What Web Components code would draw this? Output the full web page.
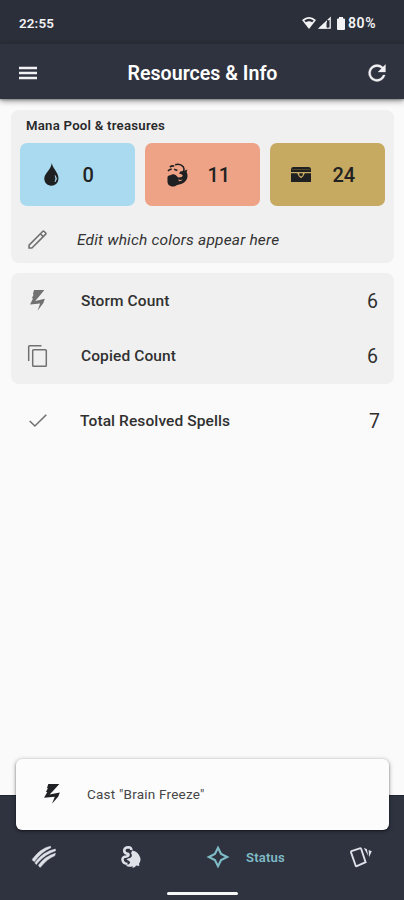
<!DOCTYPE html>
<html lang="en">
<head>
<meta charset="utf-8">
<title>Resources &amp; Info</title>
<style>
html,body{margin:0;height:100%}
body{font-family:Roboto,"Liberation Sans",sans-serif;background:#fafafa;overflow:hidden}
</style>
</head>
<body>
<spell-app></spell-app>
<script>
const ICONS = {
  menu: ['0 0 18 12', '<path d="M0 1h18M0 6h18M0 11h18" fill="none" stroke="currentColor" stroke-width="2.300"/>'],
  refresh: ['3.5 3.5 17 17', '<path d="M17.65 6.35A7.95 7.95 0 0 0 12 4a8 8 0 1 0 7.73 10h-2.08A6 6 0 1 1 12 6c1.66 0 3.14.69 4.22 1.78L13 11h7V4z" stroke="currentColor" stroke-width=".3"/>'],
  wifi: ['0 0 14 12', '<path d="M0 3Q7-3 14 3L7 12z"/><path d="M2.3 3.5Q7 .2 11.7 3.5L10.2 5.3Q7 3 3.8 5.3z" fill="#2b2f39"/>'],
  signal: ['0 0 13 12', '<path d="M1.5 11.2H12.2V1z" fill="none" stroke="currentColor" stroke-width="1.3"/><path d="M1 11.5L8.5 4.5V11.5z"/><path d="M9.7 3v7.600" stroke="#2b2f39" stroke-width="1.300"/>'],
  battery: ['0 0 8 13', '<path d="M2 0h4v1.5h1q1 0 1 1V12q0 1-1 1H1q-1 0-1-1V2.500q0-1 1-1h1z"/>'],
  drop: ['0 0 16 23', '<path d="M8.300 0C9 5 15.400 9.300 15.400 15.300C15.400 20 12 22.700 7.800 22.700C3.300 22.700.3 19.600.3 15.600C.3 10.200 7.300 7.300 8.300 0z"/><path d="M12 12.500Q14.800 16 11.800 18.800Q13.300 15.800 12 12.500z" fill="#a9daef" stroke="#a9daef" stroke-width=".7"/>'],
  flame: ['0 0 22 24', '<path d="M.5 15Q.3 12.300 3.500 12.300Q6.500 10.300 9 12Q12 13.500 12 16.500Q13.500 19.500 10.500 22Q8 24 5 23.500Q.8 22.500.5 19z"/><path d="M8.500 1.700Q14 .3 17 3.800Q18.600 6 17.300 8.500M3 4Q5.500 2.300 7.500 3.300M1 8Q3 5.800 5 6.300M7.500 6.300L10.800 7.600" fill="none" stroke="currentColor" stroke-width="1.600"/><path d="M14 8.500Q18.500 8 21.300 6.500Q19.800 9 21.400 11.500Q22 15.500 19 18.500Q16.500 21.300 10 22L11.500 18.600Q15.500 18 17 16Q14.500 17.500 12 16.500L11 14.300Q16 14.800 16.500 12.500Q16 10.800 12.500 10.500z"/>'],
  chest: ['0 0 20 15', '<path d="M2 0H18Q20 .3 20 2.500V5H0V2.500Q0 .3 2 0zM0 6.200H6.200L7.700 9.200L10 11.200L12.300 9.200L13.800 6.200H20V15H0z"/><path d="M8.300 6.300H11.700V8.200L10 9.600L8.300 8.200z"/><path d="M1 2.500h18" stroke="#6c602f" stroke-width=".6"/>'],
  pencil: ['3 3 18 18', '<path d="M4 17.300V20H6.700L19.800 6.900Q20.300 6.400 19.800 5.900L18.100 4.200Q17.600 3.700 17.100 4.200zM14.700 6.600L17.400 9.300" fill="none" stroke="currentColor" stroke-width="1.500"/>'],
  bolt: ['0 0 16 21', '<path d="M4.300 0H15.300L9 7.300L5.500 10.900L15.800 8.800L14.300 13L8 20.700L10.800 13.500L0 14.400L3.200 8.600L2 8L3.900 4.800L3 4.300z"/>'],
  copy: ['2 1 19 22', '<path d="M2.700 17V2.500Q2.700 1.700 3.500 1.700H15.500M7.500 5.700H19.500Q20.300 5.700 20.300 6.500V21.500Q20.300 22.300 19.500 22.300H7.500Q6.700 22.300 6.700 21.500V6.500Q6.700 5.700 7.500 5.700z" fill="none" stroke="currentColor" stroke-width="1.500"/>'],
  check: ['0 0 18 13', '<path d="M.7 7L5.900 12L17.300.7" fill="none" stroke="currentColor" stroke-width="1.600"/>'],
  slashes: ['0 0 24 22', '<path d="M2.500 15.500Q.2 15 .3 13.200Q8.500 2.200 18.500.2L18.800 1.800Q9.500 5.700 2.500 15.500zM4.600 18.400Q2.800 18 3.200 16.300Q11.500 5.500 23.300 3L23.600 4.800Q13.500 8.200 6.600 15.800Q5.300 17 4.600 18.400zM8.400 21.300Q6.500 20.800 6.600 19Q13.300 10 23.500 7.300L22.700 9.800Q15.500 12.500 8.400 21.300z" stroke="currentColor" stroke-width=".5"/>'],
  fist: ['0 0 20 23', '<path d="M10.300 4.300Q10.500 1.400 7.500 1.300Q3.200 1.300 3.200 5.200Q3.500 8 7.300 8.400Q8.300 10.300 5.500 11Q1.300 11 1.500 14.500Q2.300 18.800 6.500 18.500" fill="none" stroke="currentColor" stroke-width="2.600"/><path d="M11.300 4.600Q17 6 18.500 10.500Q20.800 14.500 18 18.500L18.300 20.800L15.300 20.500Q14.300 22.300 11.500 22.900L11.800 21.200Q7.500 22.700 5 20.500Q8.300 19.300 9.300 17.500Q9 15.500 5.500 14.500Q6.500 13 9.500 12.300Q12 10.300 10 7.300z"/>'],
  spark: ['0 0 22 22', '<path d="M11 1.800L14.100 7.900L20.200 11L14.100 14.100L11 20.200L7.900 14.100L1.800 11L7.900 7.900z" fill="none" stroke="currentColor" stroke-width="2.100"/>'],
  cards: ['0 0 22 21', '<path d="M1.500 4.200L9.800 1.400Q10.900 1.100 11.300 2.200L15.600 15.200L6.800 19.200Q6 19.400 5.600 18.500L1 5.300Q.9 4.500 1.500 4.200z" fill="none" stroke="currentColor" stroke-width="1.900"/><path d="M13.800 1L16.800 2L18.300 9zM18.700 3.100L21.800 4.200L19 10.300z"/>']
};

class UiIcon extends HTMLElement {
  connectedCallback() {
    const [box, art] = ICONS[this.getAttribute('name')];
    this.attachShadow({mode: 'open'}).innerHTML = `
      <style>:host{display:block;flex:none;width:var(--w,24px);height:var(--h,24px)}svg{display:block;width:100%;height:100%;overflow:visible}</style>
      <svg viewBox="${box}" fill="currentColor" preserveAspectRatio="none" aria-hidden="true">${art}</svg>`;
  }
}

const define = (tag, html) => customElements.define(tag, class extends HTMLElement {
  connectedCallback() {
    if (!this.shadowRoot) this.attachShadow({mode: 'open'}).innerHTML = html;
  }
});

customElements.define('ui-icon', UiIcon);

define('status-bar', `<style>
  :host{display:flex;align-items:center;height:44px;box-sizing:border-box;padding:2px 26px 0 19px;background:#2b2f39;color:#f3f3f5;font-size:13.400px;font-weight:600}
  .time{flex:1;letter-spacing:.15px}
  .pct{margin-left:3px;width:30px;font-size:14px;letter-spacing:.6px}
</style>
<span class="time">22:55</span>
<ui-icon name="wifi" style="--w:14px;--h:12px"></ui-icon>
<ui-icon name="signal" style="--w:13px;--h:12px;margin:0 6px 0 2px"></ui-icon>
<ui-icon name="battery" style="--w:8px;--h:13px"></ui-icon>
<span class="pct">80%</span>`);

define('app-bar', `<style>
  :host{display:grid;grid-template-columns:18px 1fr 18px;align-items:center;height:55px;box-sizing:border-box;padding:2px 18px 0 19px;background:#2f3340;color:#f1f1f3;box-shadow:0 2px 6px #0006,0 1px 2px #0004;position:relative;z-index:1}
  h1{margin:0;padding-top:2px;text-align:center;font-size:19.600px;font-weight:600;line-height:24px;color:#fff}
</style>
<ui-icon name="menu" style="--w:18px;--h:12px"></ui-icon>
<h1><slot></slot></h1>
<ui-icon name="refresh" style="--w:18px;--h:18px"></ui-icon>`);

define('info-card', `<style>
  :host{display:block;box-sizing:border-box;margin:0 10px 10px 11px;background:#f0f0f0;border-radius:8px}
</style><slot></slot>`);

define('mana-tile', `<style>
  :host{display:flex;align-items:center;height:63px;box-sizing:border-box;border-radius:7px;background:var(--tile);color:#1f2022;padding-left:19px}
  .icon{width:25px;display:flex;justify-content:center}
  .count{margin-left:18.500px;font-size:20px;font-weight:500;color:#222}
</style><div class="icon"><slot name="icon"></slot></div><span class="count"><slot></slot></span>`);

define('count-row', `<style>
  :host{display:flex;align-items:center;height:55px;box-sizing:border-box;padding:0 var(--end,16px) 0 14px;color:#303030}
  .icon{width:25px;display:flex;justify-content:center;color:#717171}
  .label{flex:1;margin-left:var(--gap,31px);font-size:15.500px;font-weight:500;letter-spacing:.1px}
  .value{font-size:19.500px;font-weight:400;padding-top:2px}
</style><div class="icon"><slot name="icon"></slot></div><span class="label"><slot></slot></span><span class="value"><slot name="value"></slot></span>`);

define('snack-bar', `<style>
  :host{display:flex;align-items:center;height:71px;box-sizing:border-box;padding:0 0 2px 28px;border-radius:6px;background:#fcfcfc;color:#464646;font-size:13.500px;letter-spacing:.22px;box-shadow:0 1px 5px #0005,0 1px 2px #0006}
  ui-icon{color:#202124}
  span{margin-left:27px}
</style><ui-icon name="bolt" style="--w:16px;--h:20px"></ui-icon><span><slot></slot></span>`);

define('bottom-nav', `<style>
  :host{display:flex;flex-direction:column;height:105px;background:#2f3340;color:#dfe1e8;border-top:1px solid #1e2630;box-sizing:border-box}
  nav{display:flex;align-items:center;height:24px;margin-top:49px;padding-left:32px}
  .active{display:flex;align-items:center;color:#7fbcc6;margin-left:66px;width:143px}
  .active span{margin-left:17px;font-size:13px;font-weight:600;letter-spacing:.2px}
  .home{width:71px;height:3px;border-radius:2px;background:#f7f7f8;margin:23px auto 0}
</style>
<nav>
  <ui-icon name="slashes" style="--w:24px;--h:22px"></ui-icon>
  <ui-icon name="fist" style="--w:20px;--h:22px;margin-left:65px"></ui-icon>
  <div class="active"><ui-icon name="spark" style="--w:22px;--h:22px"></ui-icon><span>Status</span></div>
  <ui-icon name="cards" style="--w:22px;--h:21px"></ui-icon>
</nav>
<div class="home"></div>`);

define('spell-app', `<style>
  :host{display:flex;flex-direction:column;height:900px;width:404px;background:#fafafa;position:relative}
  main{flex:1;padding-top:11px;box-sizing:border-box}
  h2{margin:0;padding:7px 0 0 15px;height:33px;box-sizing:border-box;font-size:13.200px;font-weight:600;line-height:18px;color:#29292b;letter-spacing:.24px}
  .tiles{display:grid;grid-template-columns:repeat(3,115px);gap:10px;margin-left:9px}
  .edit{display:flex;align-items:center;height:57px;padding:9px 0 0 17px;box-sizing:border-box;color:#707070}
  .edit span{margin-left:30px;padding-top:1px;font-size:15.500px;font-style:italic;letter-spacing:.18px;color:#333}
  snack-bar{position:absolute;left:16px;width:373px;top:759px;z-index:2}
</style>
<status-bar></status-bar>
<app-bar>Resources &amp; Info</app-bar>
<main>
  <info-card>
    <h2>Mana Pool &amp; treasures</h2>
    <div class="tiles">
      <mana-tile style="--tile:#a9daef"><ui-icon slot="icon" name="drop" style="--w:15px;--h:23px"></ui-icon>0</mana-tile>
      <mana-tile style="--tile:#eea286"><ui-icon slot="icon" name="flame" style="--w:21px;--h:24px;margin-left:1px"></ui-icon>11</mana-tile>
      <mana-tile style="--tile:#c6aa61"><ui-icon slot="icon" name="chest" style="--w:20px;--h:15px;margin-right:1px"></ui-icon>24</mana-tile>
    </div>
    <div class="edit"><ui-icon name="pencil" style="--w:19px;--h:19px"></ui-icon><span>Edit which colors appear here</span></div>
  </info-card>
  <info-card style="height:111px">
    <count-row><ui-icon slot="icon" name="bolt" style="--w:15px;--h:21px"></ui-icon>Storm Count<span slot="value">6</span></count-row>
    <count-row><ui-icon slot="icon" name="copy" style="--w:19px;--h:22px"></ui-icon>Copied Count<span slot="value">6</span></count-row>
  </info-card>
  <count-row style="margin:-1px 10px 0 11px;--gap:30px;--end:14px"><ui-icon slot="icon" name="check" style="--w:18px;--h:13px"></ui-icon>Total Resolved Spells<span slot="value">7</span></count-row>
</main>
<snack-bar>Cast "Brain Freeze"</snack-bar>
<bottom-nav></bottom-nav>`);
</script>
</body>
</html>
